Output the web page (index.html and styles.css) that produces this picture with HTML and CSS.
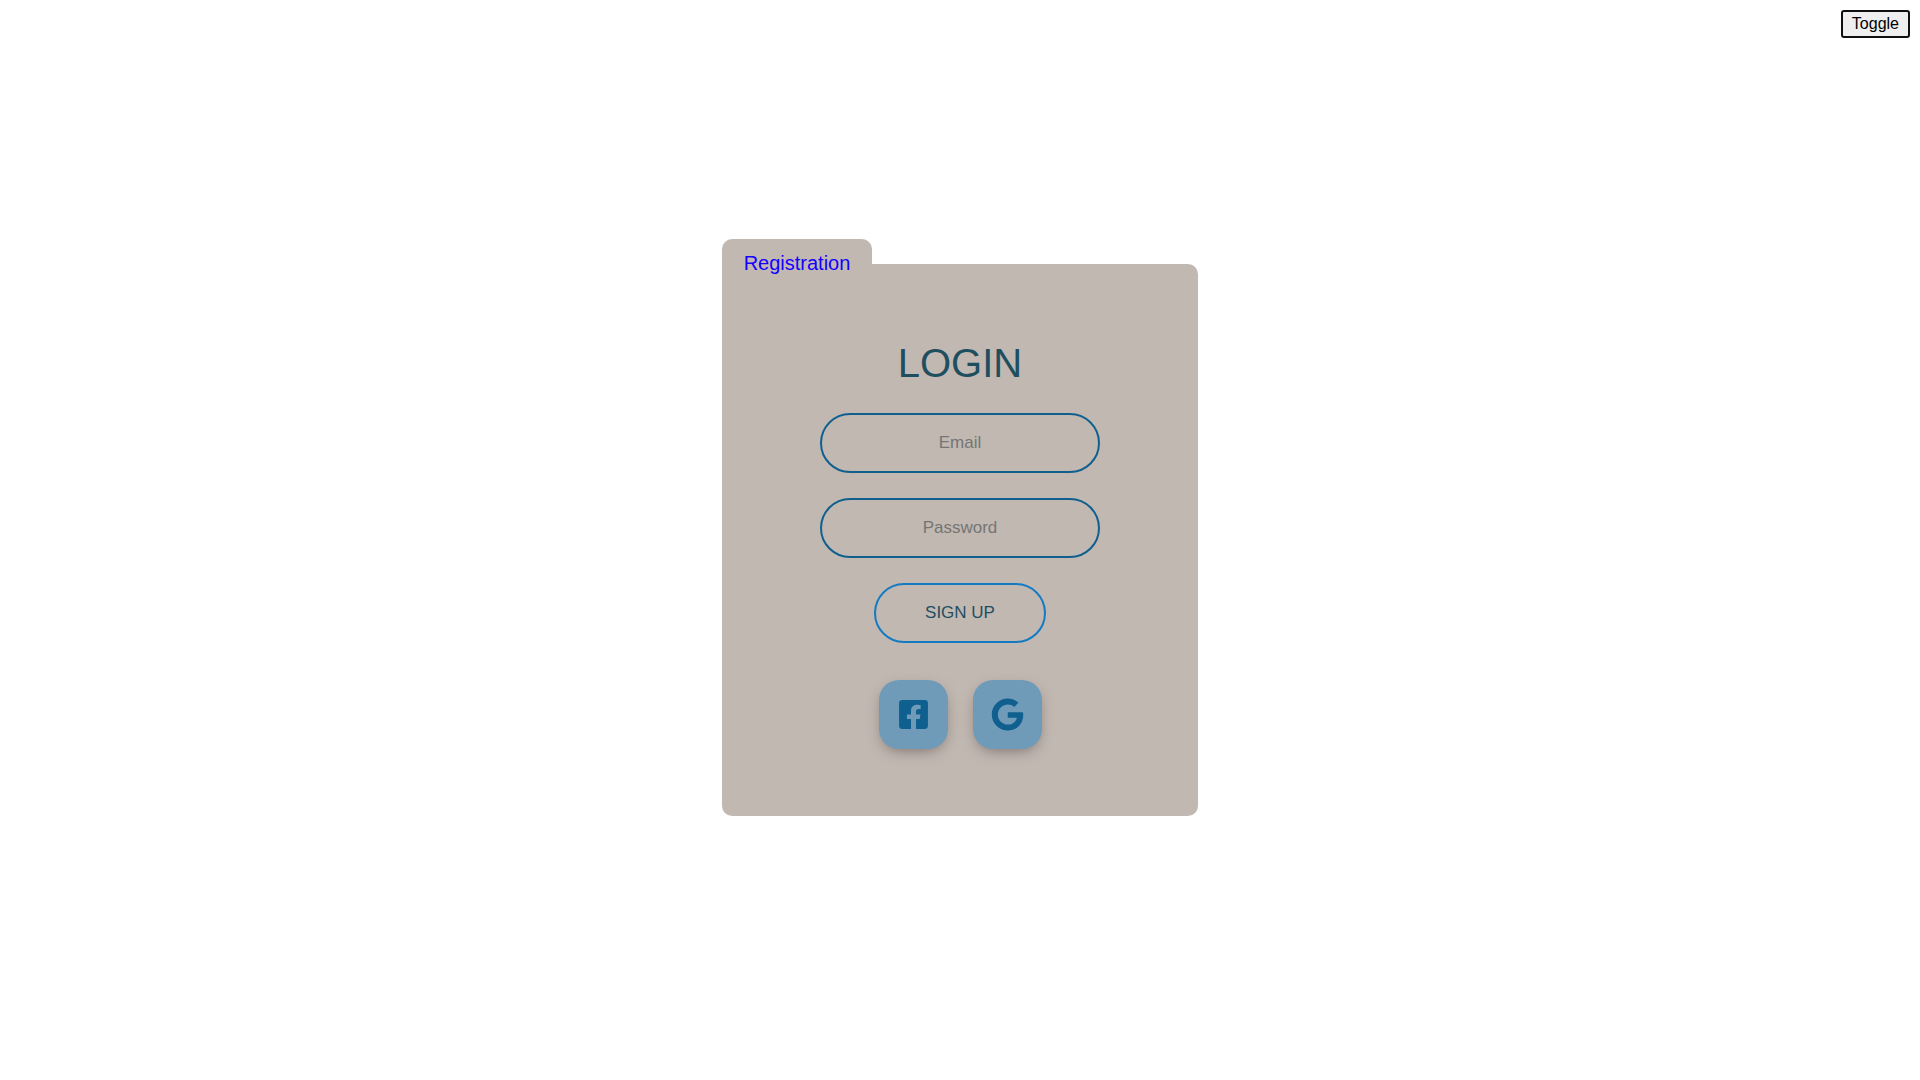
FILE: index.html
```html
<!DOCTYPE html>
<html lang="en">
<head>
  <meta charset="utf-8">
  <meta name="viewport" content="width=device-width, initial-scale=1">
  <title>Login</title>
  <link rel="stylesheet" href="styles.css">
</head>
<body>
  <button class="toggle" type="button">Toggle</button>
  <main class="card">
    <a class="card-tab" href="#registration">Registration</a>
    <form class="form">
      <h1 class="title">LOGIN</h1>
      <input class="field" type="email" placeholder="Email" aria-label="Email">
      <input class="field" type="password" placeholder="Password" aria-label="Password">
      <button class="submit" type="submit">SIGN UP</button>
    </form>
    <div class="socials">
      <a class="social" href="#facebook" aria-label="Facebook">
        <svg class="icon" viewBox="-32 0 512 512" aria-hidden="true"><path d="M400 32H48A48 48 0 0 0 0 80v352a48 48 0 0 0 48 48h137.25V327.69h-63V256h63v-54.64c0-62.15 37-96.48 93.67-96.48 27.14 0 55.52 4.84 55.52 4.84v61h-31.27c-30.81 0-40.42 19.12-40.42 38.73V256h68.78l-11 71.69h-57.78V480H400a48 48 0 0 0 48-48V80a48 48 0 0 0-48-48z"/></svg>
      </a>
      <a class="social" href="#google" aria-label="Google">
        <svg class="icon" viewBox="-12 0 512 512" aria-hidden="true"><path d="M488 261.8C488 403.3 391.1 504 248 504 110.8 504 0 393.2 0 256S110.8 8 248 8c66.8 0 123 24.5 166.3 64.9l-67.5 64.9C258.5 52.6 94.3 116.6 94.3 256c0 86.5 69.1 156.6 153.7 156.6 98.2 0 135-70.4 140.8-106.9H248v-85.3h236.1c2.3 12.7 3.9 24.9 3.9 41.4z"/></svg>
      </a>
    </div>
  </main>
</body>
</html>
```
FILE: styles.css
```css
* {
  box-sizing: border-box;
}

body {
  display: grid;
  grid-template-rows: 1fr auto 1fr;
  justify-items: center;
  min-height: 100vh;
  margin: 0;
  background: #fff;
  color: #1f4e5f;
  font-family: "Liberation Sans", Arial, sans-serif;
}

.toggle {
  align-self: start;
  justify-self: end;
  height: 28px;
  margin: 10px;
  padding: 0 9px;
  border: 2px solid #101010;
  border-radius: 3px;
  background: #efefef;
  color: #000;
  font: inherit;
  font-size: 16px;
}

.card {
  position: relative;
  width: 100%;
  max-width: 476px;
  padding: 76px 24px 67px;
  border-radius: 10px;
  background: #c1b8b2;
}

.card-tab {
  position: absolute;
  top: -25px;
  left: 0;
  width: 150px;
  height: 50px;
  border-radius: 10px;
  background: #c1b8b2;
  color: #1400ff;
  font-size: 20px;
  line-height: 48px;
  text-align: center;
  text-decoration: none;
}

.form {
  display: flex;
  flex-direction: column;
  align-items: center;
  gap: 25px;
}

.title {
  margin: 0;
  padding-bottom: 2px;
  font-size: 40px;
  font-weight: 400;
  line-height: 46px;
}

.field,
.submit {
  height: 60px;
  border: 2px solid #10608f;
  border-radius: 30px;
  background: transparent;
  color: inherit;
  font: inherit;
  font-size: 17px;
  text-align: center;
}

.field {
  width: 100%;
  max-width: 280px;
}

.field::placeholder {
  color: #757575;
}

.submit {
  padding: 0 49px;
  border-color: #147bc3;
}

.socials {
  display: flex;
  justify-content: center;
  gap: 25px;
  margin-top: 37px;
}

.social {
  display: grid;
  place-items: center;
  width: 69px;
  height: 69px;
  border-radius: 20px;
  background: #6f9bb9;
  box-shadow: 0 5px 15px -5px rgba(60, 40, 35, 0.6);
}

.icon {
  width: 33px;
  height: 33px;
  fill: #10608f;
}
```
